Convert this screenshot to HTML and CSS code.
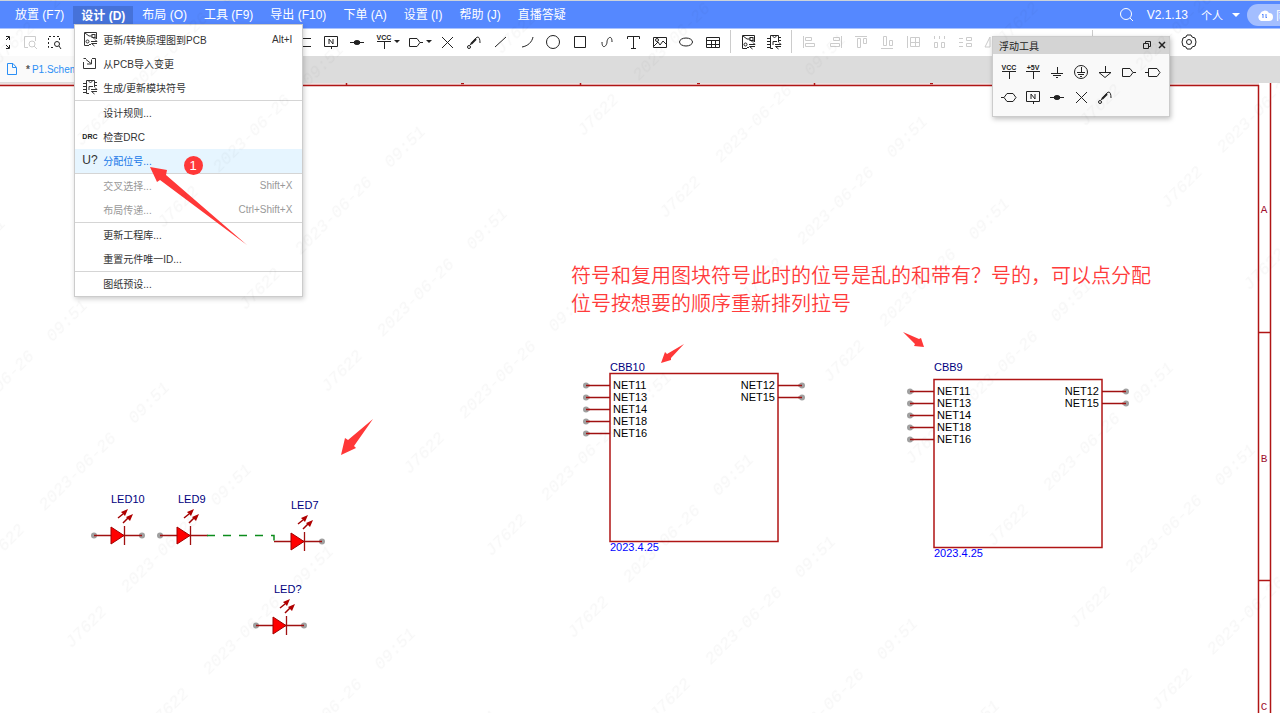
FILE: index.html
```html
<!DOCTYPE html>
<html lang="zh-CN">
<head>
<meta charset="utf-8">
<title>P1.Schematic</title>
<link rel="stylesheet" href="styles.css">
</head>
<body>
<svg class="defs" aria-hidden="true">
  <symbol id="i-update" viewBox="0 0 16 16"><path d="M7 14.500H2.500v-13h12V8M3 2l4 3h3M14 7h-3"/><rect x="10" y="3.500" width="3" height="3"/><circle cx="5.500" cy="10.500" r="1.500"/><path d="M7 13.500h2M9 10.500h6l-2-2M15 12.500H9.500l3 2.500"/></symbol>
  <symbol id="i-module" viewBox="0 0 16 16"><path d="M7 14.500H4.500v-13h8V8M1 4.500h3M1 7.500h3M1 10.500h3M1 13.500h3M13 3.500h2M13 6.500h2M7 2c0 2 3 2 3 0M7 11V7.500h4M9 10.500h6l-2-2M15 12.500H9.500l3 2.500"/></symbol>
  <symbol id="i-import" viewBox="0 0 16 16"><path d="M4 3.500H1.500M1.500 7v6.500h12v-10H10M4 4.500l5 4M9.500 4.500v4.500H5"/></symbol>
  <symbol id="i-vcc" viewBox="0 0 16 16"><path d="M1 7.500h14M8.500 7v8"/><text x="8" y="6" class="tiny">VCC</text></symbol>
  <symbol id="i-5v" viewBox="0 0 16 16"><path d="M1 7.500h14M8.500 7v8"/><text x="8" y="6" class="tiny">+5V</text></symbol>
  <symbol id="i-gnd" viewBox="0 0 16 16"><path d="M8.500 3v6M2 9.500h12M4 11.500h8M7 13.500h2"/></symbol>
  <symbol id="i-earth" viewBox="0 0 16 16"><circle cx="8" cy="8" r="6.500"/><path d="M8.500 3v5M4 8.500h8M5 10.500h6M7 12.500h2"/></symbol>
  <symbol id="i-agnd" viewBox="0 0 16 16"><path d="M8.500 2v6M2 8.500h12l-6 5z"/></symbol>
  <symbol id="i-port" viewBox="0 0 16 16"><path d="M1.500 4.500H9l3 4-3 4H1.500zM12 8.500h3"/></symbol>
  <symbol id="i-portin" viewBox="0 0 16 16"><path d="M0 8.500h3M3.500 4.500H12l3 4-3 4H3.500z"/></symbol>
  <symbol id="i-portbi" viewBox="0 0 16 16"><path d="M0 8.500h3l3-4h6l3 4-3 4H6l-3-4"/></symbol>
  <symbol id="i-net" viewBox="0 0 16 16"><path d="M1.500 2.500h13v10h-13zM8.500 12v3M6 10V5l4 5V5"/></symbol>
  <symbol id="i-junction" viewBox="0 0 16 16"><path d="M1 8.500h14"/><ellipse cx="8" cy="8.500" rx="3" ry="2" class="solid"/></symbol>
  <symbol id="i-cross" viewBox="0 0 16 16"><path d="M3 3l11 11M14 3L3 14"/></symbol>
  <symbol id="i-probe" viewBox="0 0 16 16"><circle cx="3" cy="13" r="1.500"/><path d="M4 11l6-7c2-2 4-1 4 5"/><path d="M5 10l5-5" class="thick"/></symbol>
  <symbol id="i-bus" viewBox="0 0 16 16"><path d="M2 4l4 .5h8M2 13l4-.5h8"/></symbol>
  <symbol id="i-line" viewBox="0 0 16 16"><path d="M3 13L14 3"/></symbol>
  <symbol id="i-arc" viewBox="0 0 16 16"><path d="M3 13C9 12 13 8 14 3"/></symbol>
  <symbol id="i-circle" viewBox="0 0 16 16"><circle cx="8" cy="8" r="6.500"/></symbol>
  <symbol id="i-rect" viewBox="0 0 16 16"><path d="M2.500 2.500h11v11h-11z"/></symbol>
  <symbol id="i-curve" viewBox="0 0 16 16"><path d="M3 8c0 8 5 4 5 0s5-8 5 0"/></symbol>
  <symbol id="i-text" viewBox="0 0 16 16"><path d="M2.500 5V2.500h12V5M8.500 2v12M6 14.500h5"/></symbol>
  <symbol id="i-image" viewBox="0 0 16 16"><path d="M1.500 3.500h13v10h-13zM2 12l4-4 2 3 3-4 4 4"/><circle cx="5" cy="6" r="1.500"/></symbol>
  <symbol id="i-ellipse" viewBox="0 0 16 16"><ellipse cx="8" cy="8" rx="6.500" ry="4"/></symbol>
  <symbol id="i-table" viewBox="0 0 16 16"><path d="M1.500 3.500h13v10h-13zM1 6.500h14M1 10.500h14M6.500 6v7M10.500 6v7"/></symbol>
  <symbol id="i-expand" viewBox="0 0 16 16"><path d="M9 2.500h3.500V6M12 3L9 6M9 14.500h3.500V11M12 14l-3-3"/></symbol>
  <symbol id="i-zoomdoc" viewBox="0 0 16 16"><path d="M6 13.500H2.500v-11h11V7M12 12l3 3"/><circle cx="10" cy="10" r="3"/></symbol>
  <symbol id="i-zoomsel" viewBox="0 0 16 16"><path d="M7 13.500H2.500v-11h11V8" stroke-dasharray="2 2"/><path d="M13 12l2 3"/><circle cx="11" cy="10" r="2.500"/></symbol>
  <symbol id="i-left" viewBox="0 0 16 16"><path d="M2.500 2v12M4.500 3.500h6v3h-6zM4.500 9.500h9v3h-9z"/></symbol>
  <symbol id="i-right" viewBox="0 0 16 16"><path d="M14.500 2v12M6.500 3.500h6v3h-6zM3.500 9.500h9v3h-9z"/></symbol>
  <symbol id="i-top" viewBox="0 0 16 16"><path d="M2 2.500h12M4.500 4.500h3v9h-3zM10.500 4.500h3v5h-3z"/></symbol>
  <symbol id="i-bottom" viewBox="0 0 16 16"><path d="M2 14.500h12M4.500 2.500h3v9h-3zM10.500 6.500h3v5h-3z"/></symbol>
  <symbol id="i-grid" viewBox="0 0 16 16"><path d="M2.500 2v12M5.500 3.500h9v9h-9zM10.500 4v8M5 8.500h9"/></symbol>
  <symbol id="i-hdist" viewBox="0 0 16 16"><path d="M3.500 8.500h3v5h-3zM10.500 8.500h3v5h-3zM3.500 2v3M8.500 2v3M13.500 2v3"/></symbol>
  <symbol id="i-vdist" viewBox="0 0 16 16"><path d="M9.500 3.500h5v3h-5zM9.500 9.500h5v3h-5zM2 4.500h4M2 8.500h4M2 12.500h4"/></symbol>
  <symbol id="i-rotate" viewBox="0 0 16 16"><path d="M7 3L2 13h5zM10 3l4 10h-4z"/></symbol>
  <symbol id="i-gear" viewBox="0 0 16 16"><path d="M6 1h4l1 2 3 1 1 4-1 4-3 1-1 2H6l-1-2-3-1-1-4 1-4 3-1z"/><circle cx="8" cy="8" r="2.500"/></symbol>

  <symbol id="led" viewBox="0 0 60 40" overflow="visible">
    <path d="M2 27.500h48M32.500 18v19" class="wire"/>
    <path d="M19 19v17l13-8.500z" class="led-body"/>
    <path d="M26 10l5-4M31 15l5-5" class="ray"/>
    <path d="M36 1l-7 3 4 4zM41 6l-7 3 4 4z" class="ray-tip"/>
  </symbol>
  <symbol id="block" viewBox="0 0 220 170" overflow="visible">
    <rect x="24" y="0.500" width="168" height="168" class="outline"/>
    <path d="M0 12.500h24M0 24.500h24M0 36.500h24M0 48.500h24M0 60.500h24M192 12.500h24M192 24.500h24" class="wire"/>
    <g class="pins"><circle cx="0" cy="12.500" r="3"/><circle cx="0" cy="24.500" r="3"/><circle cx="0" cy="36.500" r="3"/><circle cx="0" cy="48.500" r="3"/><circle cx="0" cy="60.500" r="3"/><circle cx="216" cy="12.500" r="3"/><circle cx="216" cy="24.500" r="3"/></g>
    <path d="M0 12.500h4M0 24.500h4M0 36.500h4M0 48.500h4M0 60.500h4M212 12.500h4M212 24.500h4" class="wire"/>
    <g class="net"><text x="27" y="16">NET11</text><text x="27" y="28">NET13</text><text x="27" y="40">NET14</text><text x="27" y="52">NET18</text><text x="27" y="64">NET16</text></g>
    <g class="net end"><text x="189" y="16">NET12</text><text x="189" y="28">NET15</text></g>
  </symbol>
</svg>

<div class="app">
  <header class="menubar">
    <nav class="menus">
      <button>放置 (F7)</button>
      <div class="menu-holder">
        <button class="open">设计 (D)</button>
        <div class="menu">
          <button><svg class="icon"><use href="#i-update"/></svg><span>更新/转换原理图到PCB</span><kbd>Alt+I</kbd></button>
          <button><svg class="icon"><use href="#i-import"/></svg><span>从PCB导入变更</span></button>
          <button><svg class="icon"><use href="#i-module"/></svg><span>生成/更新模块符号</span></button>
          <hr>
          <button><i></i><span>设计规则...</span></button>
          <button><i class="drc">DRC</i><span>检查DRC</span></button>
          <button class="active"><i class="mark">U?</i><span>分配位号...</span></button>
          <hr>
          <button disabled><i></i><span>交叉选择...</span><kbd>Shift+X</kbd></button>
          <button disabled><i></i><span>布局传递...</span><kbd>Ctrl+Shift+X</kbd></button>
          <hr>
          <button><i></i><span>更新工程库...</span></button>
          <button><i></i><span>重置元件唯一ID...</span></button>
          <hr>
          <button><i></i><span>图纸预设...</span></button>
        </div>
      </div>
      <button>布局 (O)</button>
      <button>工具 (F9)</button>
      <button>导出 (F10)</button>
      <button>下单 (A)</button>
      <button>设置 (I)</button>
      <button>帮助 (J)</button>
      <button>直播答疑</button>
    </nav>
    <div class="account">
      <button class="search" aria-label="搜索"><svg viewBox="0 0 16 16"><circle cx="7" cy="7" r="5.500"/><path d="M11 11l3 3"/></svg></button>
      <span class="version">V2.1.13</span>
      <button class="team">个人<span class="caret"></span></button>
      <button class="sync"><svg viewBox="0 0 16 12"><path d="M4 12a4 4 0 0 1-1-7 5 5 0 0 1 9-1 4 4 0 0 1 0 8z" fill="#fff"/><path d="M6 9V5M6 5L5 6M9 5v4M9 9l1-1" stroke="#5588ff" fill="none"/></svg><span>同步</span></button>
    </div>
  </header>

  <div class="toolbar">
    <div class="tools view">
      <button aria-label="全屏"><svg class="icon"><use href="#i-expand"/></svg></button>
      <button aria-label="缩放" disabled><svg class="icon"><use href="#i-zoomdoc"/></svg></button>
      <button aria-label="框选缩放"><svg class="icon"><use href="#i-zoomsel"/></svg></button>
    </div>
    <div class="tools wiring">
      <button aria-label="总线"><svg class="icon"><use href="#i-bus"/></svg></button>
      <button aria-label="网络标签"><svg class="icon"><use href="#i-net"/></svg></button>
      <button aria-label="节点"><svg class="icon"><use href="#i-junction"/></svg></button>
    </div>
    <button class="drop power" aria-label="电源"><svg class="icon"><use href="#i-vcc"/></svg><span class="caret dark"></span></button>
    <button class="drop port" aria-label="端口"><svg class="icon"><use href="#i-port"/></svg><span class="caret dark"></span></button>
    <div class="tools shapes">
      <button aria-label="非连接"><svg class="icon"><use href="#i-cross"/></svg></button>
      <button aria-label="探针"><svg class="icon"><use href="#i-probe"/></svg></button>
      <button aria-label="直线"><svg class="icon"><use href="#i-line"/></svg></button>
      <button aria-label="圆弧"><svg class="icon"><use href="#i-arc"/></svg></button>
      <button aria-label="圆"><svg class="icon"><use href="#i-circle"/></svg></button>
      <button aria-label="矩形"><svg class="icon"><use href="#i-rect"/></svg></button>
      <button aria-label="曲线"><svg class="icon"><use href="#i-curve"/></svg></button>
      <button aria-label="文本"><svg class="icon"><use href="#i-text"/></svg></button>
      <button aria-label="图片"><svg class="icon"><use href="#i-image"/></svg></button>
      <button aria-label="椭圆"><svg class="icon"><use href="#i-ellipse"/></svg></button>
      <button aria-label="表格"><svg class="icon"><use href="#i-table"/></svg></button>
    </div>
    <span class="sep"></span>
    <div class="tools convert">
      <button aria-label="更新PCB"><svg class="icon"><use href="#i-update"/></svg></button>
      <button aria-label="更新模块"><svg class="icon"><use href="#i-module"/></svg></button>
    </div>
    <span class="sep"></span>
    <div class="tools align">
      <button disabled aria-label="左对齐"><svg class="icon"><use href="#i-left"/></svg></button>
      <button disabled aria-label="右对齐"><svg class="icon"><use href="#i-right"/></svg></button>
      <button disabled aria-label="上对齐"><svg class="icon"><use href="#i-top"/></svg></button>
      <button disabled aria-label="下对齐"><svg class="icon"><use href="#i-bottom"/></svg></button>
      <button disabled aria-label="网格"><svg class="icon"><use href="#i-grid"/></svg></button>
      <button disabled aria-label="水平分布"><svg class="icon"><use href="#i-hdist"/></svg></button>
      <button disabled aria-label="垂直分布"><svg class="icon"><use href="#i-vdist"/></svg></button>
      <button disabled aria-label="翻转"><svg class="icon"><use href="#i-rotate"/></svg></button>
    </div>
    <span class="sep far"></span>
    <button class="settings" aria-label="设置"><svg class="icon"><use href="#i-gear"/></svg></button>
  </div>

  <div class="tabs">
    <button class="tab"><svg viewBox="0 0 12 14"><path d="M1.500 1.500H7l3.500 4v7h-9zM6.500 1v4.500H10"/></svg><span><b>*</b>P1.Schematic</span></button>
  </div>

  <main class="canvas">
    <svg class="sheet">
      <g transform="translate(0 -83)">
        <path d="M0 84h1259" class="frame-soft"/>
        <path d="M0 85.500h1259M1258.500 85v640M1270.500 83v640M1258 332.500h12M1258 580.500h12" class="frame"/>
        <path d="M346.500 83v3M461 83.500h3M580.500 83v3M697 83.500h3M814.500 83v3M930 83.500h3" class="frame"/>
        <g class="zone"><text x="1264" y="213">A</text><text x="1264" y="462">B</text><text x="1264" y="710">C</text></g>

        <g class="pins"><circle cx="94" cy="535.500" r="3"/><circle cx="142" cy="535.500" r="3"/><circle cx="160" cy="535.500" r="3"/><circle cx="322" cy="541.500" r="3"/><circle cx="256" cy="625.500" r="3"/><circle cx="304" cy="625.500" r="3"/></g>
        <use href="#led" x="92" y="508" width="60" height="40"/>
        <use href="#led" x="158" y="508" width="60" height="40"/>
        <use href="#led" x="272" y="514" width="60" height="40"/>
        <use href="#led" x="254" y="598" width="60" height="40"/>
        <path d="M207 535.500h67v6" class="link"/>
        <g class="ref"><text x="111" y="503">LED10</text><text x="178" y="503">LED9</text><text x="291" y="509">LED7</text><text x="274" y="593">LED?</text>
        <text x="610" y="371">CBB10</text><text x="934" y="371">CBB9</text></g>

        <use href="#block" x="586" y="373" width="220" height="170"/>
        <use href="#block" x="910" y="379" width="220" height="170"/>
        <g class="date"><text x="610" y="551">2023.4.25</text><text x="934" y="557">2023.4.25</text></g>
      </g>
    </svg>
    <p class="note">符号和复用图块符号此时的位号是乱的和带有？号的，可以点分配位号按想要的顺序重新排列拉号</p>
  </main>

  <section class="palette">
    <header><h2>浮动工具</h2>
      <button aria-label="停靠"><svg viewBox="0 0 10 10"><path d="M1.500 3.500h5v5h-5zM3.500 3V1.500h5v5H7"/></svg></button>
      <button aria-label="关闭"><svg viewBox="0 0 10 10"><path d="M2 2l6 6M8 2L2 8" stroke-width="1.500"/></svg></button>
    </header>
    <div class="palette-grid">
      <button aria-label="VCC"><svg class="icon"><use href="#i-vcc"/></svg></button>
      <button aria-label="+5V"><svg class="icon"><use href="#i-5v"/></svg></button>
      <button aria-label="GND"><svg class="icon"><use href="#i-gnd"/></svg></button>
      <button aria-label="保护地"><svg class="icon"><use href="#i-earth"/></svg></button>
      <button aria-label="模拟地"><svg class="icon"><use href="#i-agnd"/></svg></button>
      <button aria-label="输出端口"><svg class="icon"><use href="#i-port"/></svg></button>
      <button aria-label="输入端口"><svg class="icon"><use href="#i-portin"/></svg></button>
      <button aria-label="双向端口"><svg class="icon"><use href="#i-portbi"/></svg></button>
      <button aria-label="网络标签"><svg class="icon"><use href="#i-net"/></svg></button>
      <button aria-label="节点"><svg class="icon"><use href="#i-junction"/></svg></button>
      <button aria-label="非连接"><svg class="icon"><use href="#i-cross"/></svg></button>
      <button aria-label="探针"><svg class="icon"><use href="#i-probe"/></svg></button>
    </div>
  </section>

  <svg class="overlay" aria-hidden="true">
    <defs>
      <pattern id="wm" width="362" height="116" patternUnits="userSpaceOnUse" patternTransform="translate(291 371) rotate(-45)">
        <g class="stamp"><text x="36" y="41">J7622</text><text x="140" y="41">2023-06-26</text><text x="239" y="43">09:51</text></g>
      </pattern>
    </defs>
    <g class="marks">
      <path d="M150 167l17 3-1 5 81 70-87-65-3 2z"/>
      <path d="M341 455l4-17 3 2 25-21-19 27 2 2z"/>
      <path d="M661 363l4-11 2 2 17-10-13 14v2z"/>
      <path d="M924 347l-3-9-2 1-16-7 12 12-1 2z"/>
      <circle cx="193.500" cy="165.500" r="9.500"/>
      <text x="193" y="170">1</text>
    </g>
    <rect width="100%" height="100%" fill="url(#wm)"/>
  </svg>
</div>
</body>
</html>
```
FILE: styles.css
```css
* { box-sizing: border-box; }
body {
  margin: 0;
  font-family: "Liberation Sans", "Noto Sans CJK SC", sans-serif;
  font-size: 10px;
  color: #333;
}
button { border: 0; padding: 0; background: none; font: inherit; color: inherit; }
svg { fill: none; stroke: currentColor; flex: none; }
text { stroke: none; fill: currentColor; }
.defs { position: absolute; width: 0; height: 0; overflow: visible; }
.icon { width: 16px; height: 16px; }
.tiny { font-size: 7px; font-weight: bold; text-anchor: middle; }
.solid { fill: currentColor; }
.thick { stroke-width: 2; }

.app {
  position: relative;
  display: flex;
  flex-direction: column;
  height: 100vh;
  overflow: hidden;
  background: #fff;
}

.menubar {
  display: flex;
  justify-content: space-between;
  height: 29px;
  border-top: 1px solid #cdd3da;
  border-bottom: 1px solid #a9c3ff;
  background: #5588ff;
  color: #fff;
  font-size: 12px;
}
.menus { display: flex; gap: 1px; padding-left: 7px; }
.menus > button, .open { padding: 0 8px 2px; white-space: nowrap; }
.menu-holder { position: relative; padding-top: 5px; }
.open { height: 18px; background: #4672d9; font-weight: bold; }

.menu {
  position: absolute;
  z-index: 3;
  top: 23px;
  left: 1px;
  width: 229px;
  padding-top: 3px;
  border: 1px solid #ccc;
  background: #fff;
  color: #333;
  font-size: 10px;
  box-shadow: 1px 2px 5px rgba(0, 0, 0, .2);
}
.menu button {
  display: grid;
  grid-template-columns: 21px 1fr auto;
  align-items: center;
  width: 100%;
  height: 24px;
  padding: 0 10px 2px 7px;
  text-align: left;
}
.menu hr { margin: 0; border: 0; border-top: 1px solid #d5d5d5; }
.menu kbd { font: inherit; }
.menu i { font-style: normal; white-space: nowrap; }
.menu .active { background: #e6f5ff; color: #1677e8; }
.menu button:disabled { color: #999; }
.menu .drc { font-size: 7px; font-weight: bold; color: #222; }
.menu .mark { font-size: 12px; color: #333; }

.account { display: flex; align-items: center; margin-right: -38px; }
.search svg { display: block; width: 16px; height: 16px; }
.version { margin-left: 12px; }
.team { display: flex; align-items: center; gap: 9px; margin-left: 13px; font-size: 11px; }
.caret { border: 4px solid transparent; border-top-color: currentColor; border-bottom: 0; }
.caret.dark { border-width: 3px; border-bottom: 0; }
.sync {
  display: flex;
  align-items: center;
  gap: 3px;
  width: 71px;
  height: 22px;
  margin-left: 7px;
  padding-left: 10px;
  border-radius: 11px;
  background: #a3beff;
  font-size: 12px;
}
.sync svg { width: 16px; height: 12px; stroke: none; }

.toolbar { display: flex; align-items: center; height: 27px; padding-bottom: 2px; background: #fff; color: #222; }
.tools { display: flex; justify-content: space-between; }
.toolbar button { display: flex; align-items: center; justify-content: center; width: 20px; height: 20px; flex: none; }
.toolbar button:disabled { color: #ccc; }
.view { width: 69px; margin-left: -5px; }
.wiring { width: 72px; margin-left: 231px; }
.toolbar .drop { width: 28px; gap: 2px; }
.power { margin-left: 7px; }
.port { margin-left: 4px; }
.shapes { width: 286px; margin-left: 3px; }
.sep { width: 1px; height: 23px; margin: 0 7px; background: #ccc; }
.convert { width: 46px; }
.align { width: 202px; }
.far { margin-left: 91px; }
.settings { margin-left: 79px; }

.tabs { display: flex; height: 27px; background: #dcdcdc; }
.tab {
  display: flex;
  align-items: center;
  gap: 8px;
  width: 120px;
  height: 26px;
  padding-left: 6px;
  background: #fafafa;
  color: #2b8ff5;
}
.tab svg { width: 12px; height: 14px; }
.tab b { padding-right: 2px; color: #555; }

.canvas { position: relative; flex: 1; min-height: 0; }
.sheet { display: block; width: 100%; height: 100%; font-size: 11px; }
.frame { stroke: #b01515; stroke-width: 1.5; }
.frame-soft { stroke: #ddc0c0; }
.zone { font-family: "Liberation Mono", monospace; color: #a01030; text-anchor: middle; }
.wire { stroke: #a01010; stroke-width: 1.3; }
.outline { stroke: #b01515; stroke-width: 1.5; }
.pins { fill: #a0a0a0; stroke: none; }
.led-body { fill: #f00; stroke: #a00000; }
.ray { stroke: #a00000; stroke-width: 1.5; }
.ray-tip { fill: #b00000; stroke: none; }
.link { stroke: #0c8c1c; stroke-width: 1.5; stroke-dasharray: 8 8; }
.ref { color: #000080; }
.net { color: #000; }
.end { text-anchor: end; }
.date { color: #00f; }

.note {
  position: absolute;
  top: 178px;
  left: 571px;
  width: 584px;
  margin: 0;
  color: #ff3b3b;
  font-family: "Noto Sans CJK SC", sans-serif;
  font-weight: 350;
  font-size: 20px;
  line-height: 28px;
}

.palette {
  position: absolute;
  top: 36px;
  right: 110px;
  width: 178px;
  height: 81px;
  border: 1px solid #ccc;
  background: #f9f9f9;
  color: #222;
  box-shadow: 1px 2px 5px rgba(0, 0, 0, .25);
}
.palette header {
  display: flex;
  align-items: center;
  gap: 5px;
  height: 17px;
  padding: 0 2px 1px 6px;
  background: #d4d4d4;
}
.palette h2 { flex: 1; margin: 0; font-size: 10px; font-weight: normal; }
.palette header svg { display: block; width: 10px; height: 10px; }
.palette-grid { display: grid; grid-template-columns: repeat(7, 24px); padding: 5px 4px; }
.palette-grid button { display: flex; align-items: center; justify-content: center; height: 25px; }

.overlay {
  position: absolute;
  z-index: 4;
  inset: 0;
  width: 100%;
  height: 100%;
  pointer-events: none;
  stroke: none;
}
.marks { fill: #ff3838; }
.marks text { fill: #fff; font-size: 13px; text-anchor: middle; }
.stamp {
  font-family: "Liberation Mono", monospace;
  font-size: 17px;
  font-style: italic;
  color: rgba(0, 0, 0, .03);
  text-anchor: middle;
}
```
